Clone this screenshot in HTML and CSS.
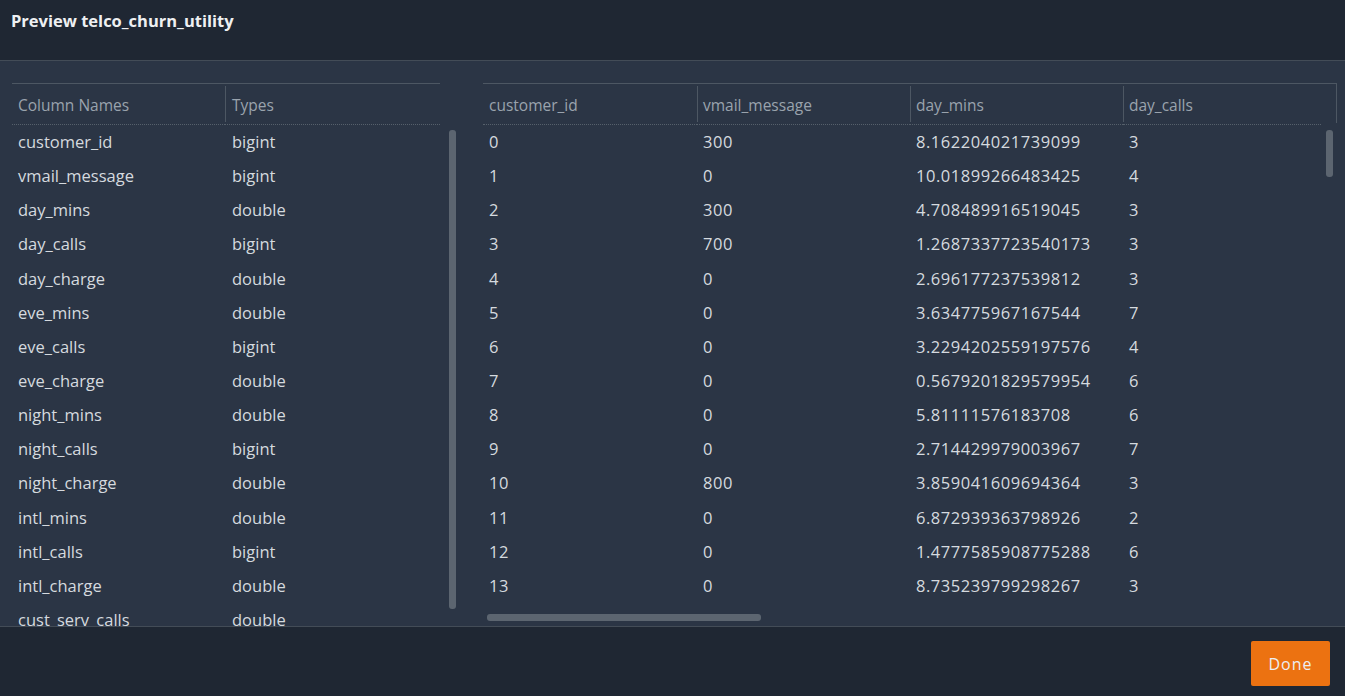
FILE: index.html
```html
<!DOCTYPE html>
<html>
<head>
<meta charset="utf-8">
<link rel="stylesheet" href="styles.css">
</head>
<body>
<div class="modal">
  <header class="head"><h1 class="title">Preview telco_churn_utility</h1></header>
  <main class="main">
    <section class="schema">
      <div class="grid schema-grid">
        <div class="th">Column Names</div><div class="th sep">Types</div>
      </div>
      <div class="schema-body">
        <div class="grid schema-grid rows">
          <div class="td">customer_id</div><div class="td">bigint</div>
          <div class="td">vmail_message</div><div class="td">bigint</div>
          <div class="td">day_mins</div><div class="td">double</div>
          <div class="td">day_calls</div><div class="td">bigint</div>
          <div class="td">day_charge</div><div class="td">double</div>
          <div class="td">eve_mins</div><div class="td">double</div>
          <div class="td">eve_calls</div><div class="td">bigint</div>
          <div class="td">eve_charge</div><div class="td">double</div>
          <div class="td">night_mins</div><div class="td">double</div>
          <div class="td">night_calls</div><div class="td">bigint</div>
          <div class="td">night_charge</div><div class="td">double</div>
          <div class="td">intl_mins</div><div class="td">double</div>
          <div class="td">intl_calls</div><div class="td">bigint</div>
          <div class="td">intl_charge</div><div class="td">double</div>
          <div class="td">cust_serv_calls</div><div class="td">double</div>
        </div>
        <div class="vscroll left-thumb"></div>
      </div>
    </section>
    <section class="data">
      <div class="grid data-grid data-head">
        <div class="th">customer_id</div><div class="th sep">vmail_message</div><div class="th sep">day_mins</div><div class="th sep">day_calls</div>
      </div>
      <div class="data-body">
        <div class="grid data-grid rows num">
          <div class="td">0</div><div class="td">300</div><div class="td">8.162204021739099</div><div class="td">3</div>
          <div class="td">1</div><div class="td">0</div><div class="td">10.01899266483425</div><div class="td">4</div>
          <div class="td">2</div><div class="td">300</div><div class="td">4.708489916519045</div><div class="td">3</div>
          <div class="td">3</div><div class="td">700</div><div class="td">1.2687337723540173</div><div class="td">3</div>
          <div class="td">4</div><div class="td">0</div><div class="td">2.696177237539812</div><div class="td">3</div>
          <div class="td">5</div><div class="td">0</div><div class="td">3.634775967167544</div><div class="td">7</div>
          <div class="td">6</div><div class="td">0</div><div class="td">3.2294202559197576</div><div class="td">4</div>
          <div class="td">7</div><div class="td">0</div><div class="td">0.5679201829579954</div><div class="td">6</div>
          <div class="td">8</div><div class="td">0</div><div class="td">5.81111576183708</div><div class="td">6</div>
          <div class="td">9</div><div class="td">0</div><div class="td">2.714429979003967</div><div class="td">7</div>
          <div class="td">10</div><div class="td">800</div><div class="td">3.859041609694364</div><div class="td">3</div>
          <div class="td">11</div><div class="td">0</div><div class="td">6.872939363798926</div><div class="td">2</div>
          <div class="td">12</div><div class="td">0</div><div class="td">1.4777585908775288</div><div class="td">6</div>
          <div class="td">13</div><div class="td">0</div><div class="td">8.735239799298267</div><div class="td">3</div>
        </div>
        <div class="vscroll right-thumb"></div>
      </div>
      <div class="hscroll"><div class="hthumb"></div></div>
    </section>
  </main>
  <footer class="foot"><button class="done">Done</button></footer>
</div>
</body>
</html>
```
FILE: styles.css
```css
* { box-sizing: border-box; }
html, body { margin: 0; padding: 0; }
body {
  width: 1345px;
  height: 696px;
  overflow: hidden;
  background: #1f2733;
  font-family: "Open Sans", "Noto Sans", sans-serif;
  color: #d5dadf;
}
.modal { display: flex; flex-direction: column; height: 696px; }
.head {
  height: 61px;
  padding: 10px 11px 0;
  background: #1f2733;
  border-bottom: 1px solid #434c57;
}
.title {
  margin: 0;
  font-size: 16.5px;
  line-height: 22px;
  font-weight: 700;
  color: #eef0f2;
}
.main {
  height: 565px;
  background: #2b3545;
  display: flex;
  padding: 22px 0 0 12px;
  overflow: hidden;
}
.schema { width: 445px; display: flex; flex-direction: column; }
.data { width: 854px; margin-left: 26px; display: flex; flex-direction: column; }
.grid { display: grid; }
.schema-grid { grid-template-columns: 213px 215px; width: 428px; }
.data-grid { grid-template-columns: 214px 213px 213px 214px; width: 854px; }
.th {
  height: 42px;
  line-height: 42px;
  padding-left: 6px;
  font-size: 15.5px;
  color: #9aa3ad;
  border-top: 1px solid #4d5763;
  border-bottom: 1px dotted #56606b;
  position: relative;
}
.schema-grid .th.sep { padding-left: 7px; }
.th.sep::before {
  content: "";
  position: absolute;
  left: 0; top: 2px; bottom: 2px;
  border-left: 1px solid #4d5763;
}
.data-head .th:last-child { border-right: 1px solid #4d5763; }
.data-head .th:last-child::after {
  content: "";
  position: absolute;
  right: -1px; bottom: -1px;
  width: 16px; height: 2px;
  background: #2b3545;
}
.rows .td {
  height: 34.15px;
  line-height: 34px;
  padding-left: 6px;
  font-size: 16.5px;
  white-space: nowrap;
}
.num .td { letter-spacing: 0.55px; }
.schema-grid.rows .td:nth-child(2n) { padding-left: 7px; }
.schema-body { display: flex; height: 520px; overflow: hidden; }
.data-body { display: flex; height: 478px; overflow: hidden; }
.vscroll {
  width: 7px;
  border-radius: 3px;
  background: #5c6570;
  margin-top: 5px;
}
.left-thumb { height: 479px; margin-left: 9px; }
.right-thumb { height: 47px; margin-left: -11px; }
.hscroll { height: 23px; padding: 11px 0 0 4px; }
.hthumb { width: 274px; height: 7px; border-radius: 3px; background: #5c6570; }
.foot {
  flex: 1;
  background: #1f2733;
  border-top: 1px solid #434c57;
  display: flex;
  justify-content: flex-end;
  padding: 14px 15px 0 0;
}
.done {
  width: 79px;
  height: 45px;
  border: none;
  border-radius: 2px;
  background: #ec7211;
  color: #eceff1;
  font-family: "Open Sans", "Noto Sans", sans-serif;
  font-size: 16px;
  letter-spacing: 1px;
  cursor: pointer;
}
```
